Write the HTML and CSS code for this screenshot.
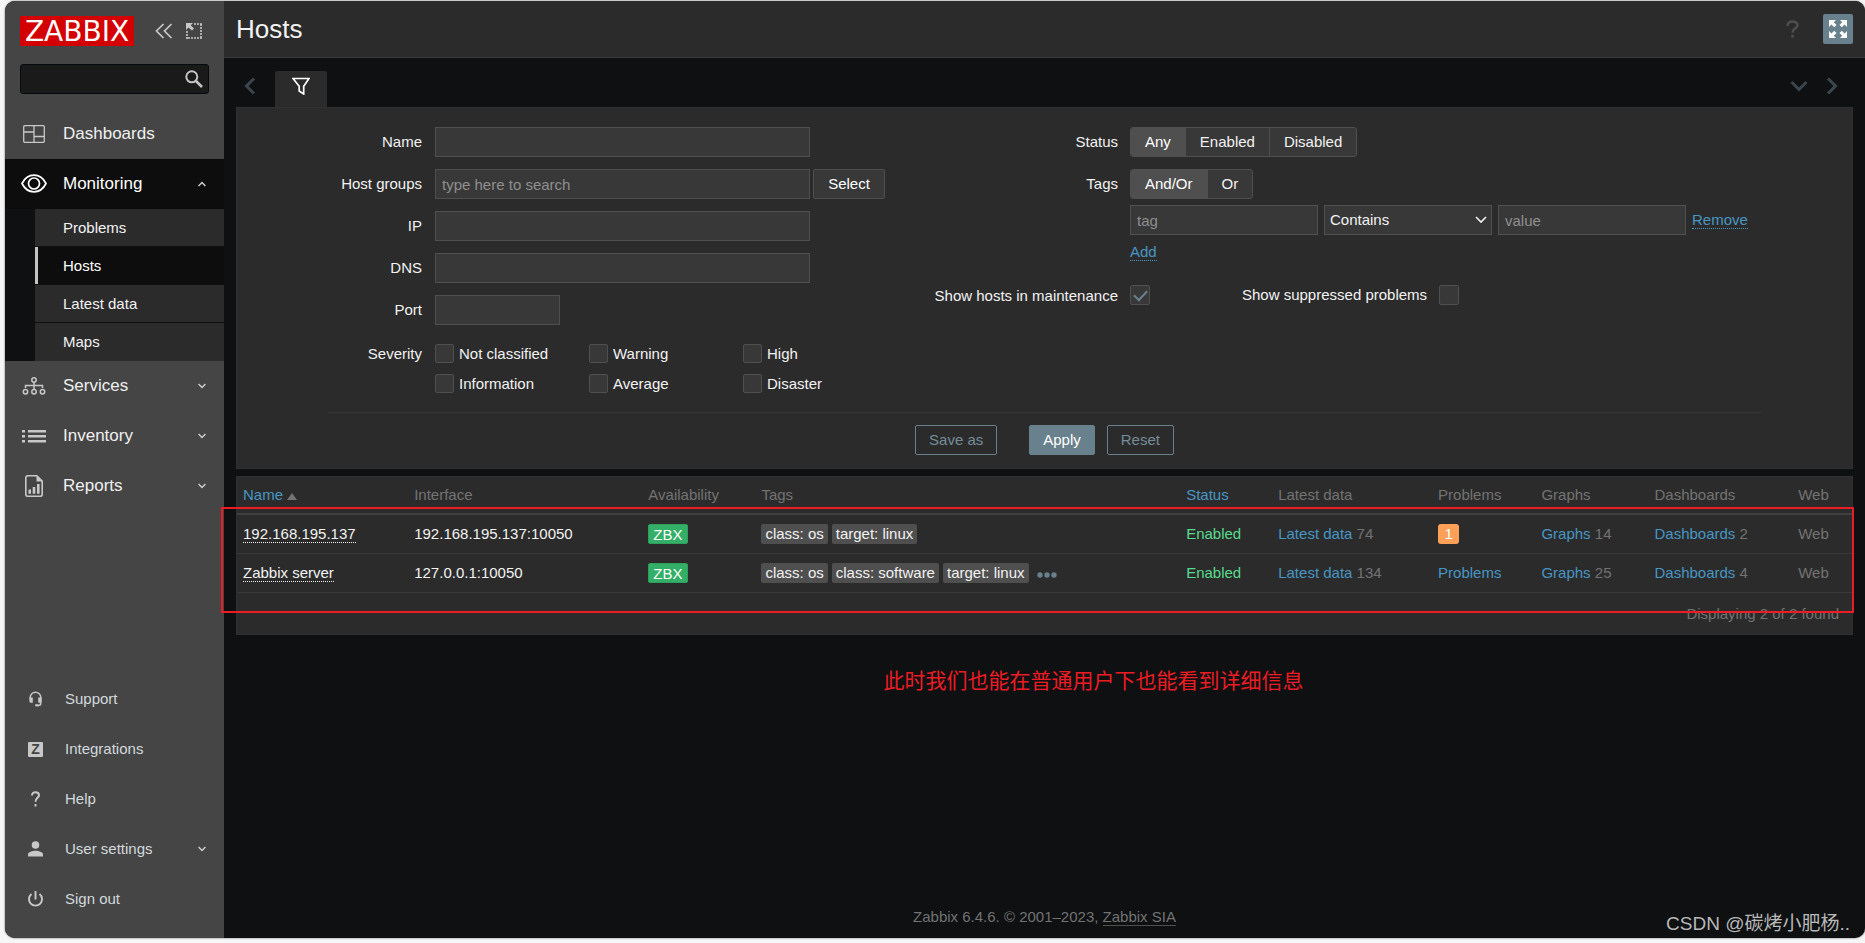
FILE: index.html
```html
<!DOCTYPE html>
<html lang="en">
<head>
<meta charset="utf-8">
<title>Hosts</title>
<link rel="stylesheet" href="styles.css">
</head>
<body>
<div class="app">
  <aside class="sidebar">
    <div class="brand">
      <a class="logo" href="#">ZABBIX</a>
      <button class="icon-btn brand-collapse" type="button" aria-label="Collapse sidebar">
        <svg width="18" height="16" viewBox="0 0 18 16" fill="none" stroke="currentColor" stroke-width="1.7"><path d="M8.5 1 1.5 8l7 7M16.500 1l-7 7 7 7"/></svg>
      </button>
      <button class="icon-btn" type="button" aria-label="Hide sidebar">
        <svg width="16" height="16" viewBox="0 0 16 16" fill="none" stroke="currentColor"><path d="M8 1h8M15 1v15M16 15H0M1 16V8" stroke-width="1.6" stroke-dasharray="2 1"/><path d="M0 0h7L4.700 2.300 8 5.600 6 7.600 2.500 4.400 0 7z" fill="currentColor" stroke="none"/></svg>
      </button>
    </div>
    <form class="search" role="search">
      <input type="text" aria-label="Search">
      <button class="icon-btn" type="button" aria-label="Run search">
        <svg width="18" height="18" viewBox="0 0 18 18" fill="none" stroke="currentColor"><circle cx="6.800" cy="6.800" r="5.500" stroke-width="2"/><path d="m11 11 6 6" stroke-width="2.600"/></svg>
      </button>
    </form>

    <nav class="menu" aria-label="Main">
      <a class="menu-item" href="#">
        <span class="menu-icon"><svg width="22" height="18" viewBox="0 0 22 18" fill="none" stroke="currentColor" stroke-width="1.300"><rect x=".7" y=".7" width="20.600" height="16.600" rx="1"/><path d="M11 1v16M1 7h10M11 11.500h10"/></svg></span>
        <span class="menu-text">Dashboards</span>
      </a>
      <a class="menu-item menu-item-open" href="#">
        <span class="menu-icon"><svg width="26" height="20" viewBox="0 0 26 20" fill="none" stroke="currentColor" stroke-width="1.700"><path d="M1 9.500C3.500 4.500 8 1.200 13 1.200s9.500 3.300 12 8.300c-2.500 5-7 8.300-12 8.300S3.500 14.500 1 9.500z"/><circle cx="13" cy="9.500" r="5.500"/></svg></span>
        <span class="menu-text">Monitoring</span>
        <svg class="menu-arrow" width="8" height="6" viewBox="0 0 8 6" fill="none" stroke="currentColor" stroke-width="1.400"><path d="m.6 5 3.400-3.600L7.400 5"/></svg>
      </a>
      <div class="submenu">
        <a class="submenu-item" href="#">Problems</a>
        <a class="submenu-item submenu-item-active" href="#">Hosts</a>
        <a class="submenu-item" href="#">Latest data</a>
        <a class="submenu-item" href="#">Maps</a>
      </div>
      <a class="menu-item" href="#">
        <span class="menu-icon"><svg width="24" height="18" viewBox="0 0 24 18" fill="none" stroke="currentColor" stroke-width="1.500"><circle cx="12" cy="3" r="2.200"/><circle cx="3.500" cy="14.800" r="2.200"/><circle cx="12" cy="14.800" r="2.200"/><circle cx="20.500" cy="14.800" r="2.200"/><path d="M12 5.200v7.400M3.500 11V8.500h17V11"/></svg></span>
        <span class="menu-text">Services</span>
        <svg class="menu-arrow" width="8" height="6" viewBox="0 0 8 6" fill="none" stroke="currentColor" stroke-width="1.400"><path d="M.6 1 4 4.600 7.400 1"/></svg>
      </a>
      <a class="menu-item" href="#">
        <span class="menu-icon"><svg width="24" height="14" viewBox="0 0 24 14" fill="currentColor"><path d="M0 1h3v2.500H0zM0 6h3v2.500H0zM0 11h3v2.500H0zM6 1h18v2.500H6zM6 6h18v2.500H6zM6 11h18v2.500H6z"/></svg></span>
        <span class="menu-text">Inventory</span>
        <svg class="menu-arrow" width="8" height="6" viewBox="0 0 8 6" fill="none" stroke="currentColor" stroke-width="1.400"><path d="M.6 1 4 4.600 7.400 1"/></svg>
      </a>
      <a class="menu-item" href="#">
        <span class="menu-icon"><svg width="18" height="22" viewBox="0 0 18 22" fill="none" stroke="currentColor"><path d="M2.800.8h9L17.200 6v13.200a2 2 0 0 1-2 2H2.800a2 2 0 0 1-2-2V2.800a2 2 0 0 1 2-2z" stroke-width="1.600"/><path d="M11.500.5V6.500h6zM3.500 14.500H6v4.300H3.500zM7.700 12h2.600v6.800H7.700zM12 9h2.600v9.800H12z" fill="currentColor" stroke="none"/></svg></span>
        <span class="menu-text">Reports</span>
        <svg class="menu-arrow" width="8" height="6" viewBox="0 0 8 6" fill="none" stroke="currentColor" stroke-width="1.400"><path d="M.6 1 4 4.600 7.400 1"/></svg>
      </a>
    </nav>

    <nav class="menu menu-user" aria-label="User">
      <a class="menu-item" href="#">
        <span class="menu-icon"><svg width="15" height="16" viewBox="0 0 15 16" fill="none" stroke="currentColor"><path d="M2.200 8V6.500a5.300 5.300 0 0 1 10.600 0V12c0 1.500-1 2.500-2.500 2.500H8" stroke-width="1.500"/><path d="M1.400 6.500h3.400v5.200H3.200c-1.200 0-1.800-.8-1.800-1.800zM10.200 6.500h3.400v3.400c0 1-.6 1.800-1.800 1.800h-1.600zM7.200 13.200h3v2h-3z" fill="currentColor" stroke="none"/></svg></span>
        <span class="menu-text">Support</span>
      </a>
      <a class="menu-item" href="#">
        <span class="menu-icon"><span class="z-icon">Z</span></span>
        <span class="menu-text">Integrations</span>
      </a>
      <a class="menu-item" href="#">
        <span class="menu-icon"><svg width="9" height="16" viewBox="0 0 9 16" fill="none" stroke="currentColor" stroke-width="2"><path d="M1 4.500C1 2.300 2.400 1.200 4.400 1.200S8 2.300 8 4.200C8 6.800 4.500 7 4.500 10.800M4.500 13v2.500"/></svg></span>
        <span class="menu-text">Help</span>
      </a>
      <a class="menu-item" href="#">
        <span class="menu-icon"><svg width="15" height="16" viewBox="0 0 15 16" fill="currentColor"><circle cx="7.500" cy="4" r="3.800"/><path d="M0 15.500v-2C0 11 4.500 9.800 7.500 9.800S15 11 15 13.500v2z"/></svg></span>
        <span class="menu-text">User settings</span>
        <svg class="menu-arrow" width="8" height="6" viewBox="0 0 8 6" fill="none" stroke="currentColor" stroke-width="1.400"><path d="M.6 1 4 4.600 7.400 1"/></svg>
      </a>
      <a class="menu-item" href="#">
        <span class="menu-icon"><svg width="15" height="16" viewBox="0 0 15 16" fill="none" stroke="currentColor" stroke-width="1.900"><path d="M3.500 3a6.500 6.500 0 1 0 8 0M7.500 0v8.500"/></svg></span>
        <span class="menu-text">Sign out</span>
      </a>
    </nav>
  </aside>

  <div class="page">
    <header class="page-header">
      <h1>Hosts</h1>
      <a class="help" href="#" aria-label="Help"><svg width="13" height="18" viewBox="0 0 13 18" fill="none" stroke="currentColor" stroke-width="2.400"><path d="M1.500 6C1.500 3 3.500 1.500 6.400 1.500S11.500 3 11.500 5.200C11.500 8.400 6.500 8.300 6.500 12.800M6.500 14.800v3"/></svg></a>
      <button class="kiosk" type="button" aria-label="Kiosk mode">
        <svg width="20" height="20" viewBox="0 0 20 20" fill="#fff"><path id="arr" d="M1 1h7L5.800 3.200l2.700 2.700-2.300 2.300-2.800-2.700L1 8z"/><use href="#arr" transform="matrix(-1 0 0 1 20 0)"/><use href="#arr" transform="matrix(1 0 0 -1 0 20)"/><use href="#arr" transform="rotate(180 10 10)"/></svg>
      </button>
    </header>

    <main class="content">
      <div class="tabs">
        <button class="icon-btn tab-nav tab-prev" type="button" aria-label="Previous tab"><svg width="12" height="18" viewBox="0 0 12 18" fill="none" stroke="currentColor" stroke-width="3"><path d="M10 1.500 2.500 9l7.500 7.500"/></svg></button>
        <button class="tab" type="button" aria-label="Filter"><svg width="18" height="18" viewBox="0 0 18 18" fill="none" stroke="currentColor" stroke-width="1.700"><path d="M1 1.500h16l-5.300 7.800V17l-4.500-3V9.300z"/></svg></button>
        <button class="icon-btn tab-nav tab-list" type="button" aria-label="List tabs"><svg width="18" height="12" viewBox="0 0 18 12" fill="none" stroke="currentColor" stroke-width="3"><path d="M1.500 2 9 9.500 16.500 2"/></svg></button>
        <button class="icon-btn tab-nav tab-next" type="button" aria-label="Next tab"><svg width="12" height="18" viewBox="0 0 12 18" fill="none" stroke="currentColor" stroke-width="3"><path d="M2 1.500 9.500 9 2 16.500"/></svg></button>
      </div>

      <form class="filter">
        <div class="filter-columns">
          <div class="fields fields-left">
            <label for="f-name">Name</label>
            <input class="field" id="f-name" type="text">
            <label for="f-groups">Host groups</label>
            <div class="with-button">
              <input class="field" id="f-groups" type="text" placeholder="type here to search">
              <button class="btn-grey" type="button">Select</button>
            </div>
            <label for="f-ip">IP</label>
            <input class="field" id="f-ip" type="text">
            <label for="f-dns">DNS</label>
            <input class="field" id="f-dns" type="text">
            <label for="f-port">Port</label>
            <input class="field field-short" id="f-port" type="text">
            <span class="severity-label" id="severity">Severity</span>
            <div class="severities" role="group" aria-labelledby="severity">
              <label><input class="check" type="checkbox">Not classified</label>
              <label><input class="check" type="checkbox">Warning</label>
              <label><input class="check" type="checkbox">High</label>
              <label><input class="check" type="checkbox">Information</label>
              <label><input class="check" type="checkbox">Average</label>
              <label><input class="check" type="checkbox">Disaster</label>
            </div>
          </div>

          <div class="fields fields-right">
            <span class="row-label" id="status">Status</span>
            <div class="segments" role="radiogroup" aria-labelledby="status">
              <label><input type="radio" name="status" checked><span>Any</span></label>
              <label><input type="radio" name="status"><span>Enabled</span></label>
              <label><input type="radio" name="status"><span>Disabled</span></label>
            </div>
            <span class="row-label" id="tags">Tags</span>
            <div class="tag-filter">
              <div class="segments" role="radiogroup" aria-labelledby="tags">
                <label><input type="radio" name="evaltype" checked><span>And/Or</span></label>
                <label><input type="radio" name="evaltype"><span>Or</span></label>
              </div>
              <div class="tag-row">
                <input class="field" type="text" placeholder="tag" aria-label="Tag">
                <div class="select">
                  <select class="field" aria-label="Operator"><option>Contains</option><option>Equals</option></select>
                  <svg width="12" height="8" viewBox="0 0 12 8" fill="none" stroke="currentColor" stroke-width="1.600"><path d="m1 1 5 5 5-5"/></svg>
                </div>
                <input class="field" type="text" placeholder="value" aria-label="Value">
                <button class="link-action" type="button">Remove</button>
              </div>
              <button class="link-action" type="button">Add</button>
            </div>
            <label class="toggle-label" for="f-maint">Show hosts in maintenance</label>
            <div class="toggles">
              <input class="check" id="f-maint" type="checkbox" checked>
              <label for="f-supp">Show suppressed problems</label>
              <input class="check" id="f-supp" type="checkbox">
            </div>
          </div>
        </div>
        <div class="filter-actions">
          <button class="btn-outline btn-save" type="button">Save as</button>
          <button class="btn-primary" type="button">Apply</button>
          <button class="btn-outline" type="button">Reset</button>
        </div>
      </form>

      <section class="hosts">
        <table>
          <colgroup>
            <col class="c-name"><col class="c-interface"><col class="c-avail"><col class="c-tags"><col class="c-status">
            <col class="c-latest"><col class="c-problems"><col class="c-graphs"><col class="c-dash"><col>
          </colgroup>
          <thead>
            <tr>
              <th><a href="#">Name <span class="sort-asc"></span></a></th><th>Interface</th><th>Availability</th><th>Tags</th><th><a href="#">Status</a></th>
              <th>Latest data</th><th>Problems</th><th>Graphs</th><th>Dashboards</th><th>Web</th>
            </tr>
          </thead>
          <tbody>
            <tr>
              <td><a class="host" href="#">192.168.195.137</a></td>
              <td>192.168.195.137:10050</td>
              <td><span class="avail">ZBX</span></td>
              <td><div class="tags"><span class="tag">class: os</span><span class="tag">target: linux</span></div></td>
              <td class="ok">Enabled</td>
              <td class="muted"><a href="#">Latest data</a> 74</td>
              <td><a class="problem-count" href="#">1</a></td>
              <td class="muted"><a href="#">Graphs</a> 14</td>
              <td class="muted"><a href="#">Dashboards</a> 2</td>
              <td class="muted">Web</td>
            </tr>
            <tr>
              <td><a class="host" href="#">Zabbix server</a></td>
              <td>127.0.0.1:10050</td>
              <td><span class="avail">ZBX</span></td>
              <td><div class="tags"><span class="tag">class: os</span><span class="tag">class: software</span><span class="tag">target: linux</span><button class="icon-btn more" type="button" aria-label="More tags"><svg width="20" height="6" viewBox="0 0 20 6" fill="currentColor"><circle cx="3" cy="3" r="2.700"/><circle cx="10" cy="3" r="2.700"/><circle cx="17" cy="3" r="2.700"/></svg></button></div></td>
              <td class="ok">Enabled</td>
              <td class="muted"><a href="#">Latest data</a> 134</td>
              <td><a href="#">Problems</a></td>
              <td class="muted"><a href="#">Graphs</a> 25</td>
              <td class="muted"><a href="#">Dashboards</a> 4</td>
              <td class="muted">Web</td>
            </tr>
          </tbody>
        </table>
        <p class="total">Displaying 2 of 2 found</p>
        <div class="highlight"></div>
      </section>

      <p class="note" lang="zh">此时我们也能在普通用户下也能看到详细信息</p>
    </main>

    <footer class="page-footer">Zabbix 6.4.6. © 2001–2023, <a href="#">Zabbix SIA</a></footer>
    <div class="watermark" lang="zh">CSDN @碳烤小肥杨..</div>
  </div>
</div>
</body>
</html>
```

FILE: styles.css
```css
* {
  box-sizing: border-box;
}

body {
  display: flex;
  min-height: 100vh;
  margin: 0;
  padding: 1px 0 5px 5px;
  background: #f6f6f6;
  color: #f2f2f2;
  font: 15px/18px "Liberation Sans", Arial, "Noto Sans CJK SC", sans-serif;
}

a {
  color: #4796c4;
  text-decoration: none;
}

button,
input,
select {
  margin: 0;
  color: inherit;
  font: inherit;
}

svg {
  display: block;
}

h1,
p {
  margin: 0;
  font-weight: normal;
}

.icon-btn {
  padding: 0;
  border: 0;
  background: none;
}

.app {
  display: flex;
  flex: 1;
  overflow: hidden;
  border-radius: 10px;
  background: #0e1012;
  box-shadow: 0 0 2px #555;
}

/* Sidebar */

.sidebar {
  display: flex;
  flex: 0 0 219px;
  flex-direction: column;
  min-width: 0;
  padding-bottom: 14px;
  background: #454545;
}

.brand {
  display: flex;
  align-items: center;
  padding: 15px 15px 0;
  color: #c8c8c8;
}

.logo {
  width: 114px;
  height: 30px;
  background: #d40000;
  color: #fff;
  font-family: "DejaVu Sans", sans-serif;
  font-size: 28px;
  line-height: 31px;
  text-align: center;
}

.brand-collapse {
  margin: 0 13px 0 21px;
}

.search {
  display: flex;
  align-items: center;
  height: 30px;
  margin: 18px 15px 15px;
  padding: 0 5px;
  border: 1px solid #050a10;
  border-radius: 3px;
  background: #1a1a1a;
  color: #c4c4c4;
}

.search input {
  flex: 1;
  min-width: 0;
  padding: 0;
  border: 0;
  outline: 0;
  background: none;
}

.menu-item {
  display: flex;
  align-items: center;
  height: 50px;
  padding: 0 18px 0 15px;
  color: #f0f0f0;
  font-size: 17px;
}

.menu-icon {
  display: flex;
  flex: 0 0 28px;
  justify-content: center;
  margin-right: 15px;
  color: #c8c8c8;
}

.menu-text {
  flex: 1;
}

.menu-arrow {
  color: #d0d0d0;
}

.menu-item-open {
  background: #0d0d0d;
  color: #fff;
}

.menu-item-open .menu-icon {
  color: #fff;
}

.submenu {
  padding-left: 30px;
  background: #0e1012;
}

.submenu-item {
  display: block;
  height: 38px;
  padding-left: 28px;
  border-bottom: 1px solid #0e1012;
  background: #2b2b2b;
  color: #f2f2f2;
  line-height: 37px;
}

.submenu-item:last-child {
  border-bottom-color: #2b2b2b;
}

.submenu-item-active {
  background: #0d0d0d;
  box-shadow: inset 3px 0 #c4c4c4;
  color: #fff;
}

.menu-user {
  margin-top: auto;
}

.menu-user .menu-item {
  color: #d2d9dd;
  font-size: 15px;
}

.menu-user .menu-icon {
  flex-basis: 31px;
  margin-right: 14px;
}

.z-icon {
  width: 15px;
  height: 15px;
  border-radius: 1px;
  background: #c8c8c8;
  color: #454545;
  font-size: 14px;
  font-weight: bold;
  line-height: 15px;
  text-align: center;
}

/* Page */

.page {
  position: relative;
  display: flex;
  flex: 1;
  flex-direction: column;
  min-width: 0;
}

.page-header {
  display: flex;
  align-items: center;
  height: 57px;
  padding: 0 12px;
  border-bottom: 1px solid #383838;
  background: #2b2b2b;
}

.page-header h1 {
  flex: 1;
  color: #f2f2f2;
  font-size: 26px;
  line-height: 30px;
}

.help {
  margin-right: 24px;
  color: #4f4f4f;
}

.kiosk {
  display: flex;
  align-items: center;
  justify-content: center;
  width: 30px;
  height: 30px;
  padding: 0;
  border: 0;
  border-radius: 2px;
  background: #69808d;
}

.content {
  flex: 1;
  padding: 13px 12px 0;
}

/* Filter */

.tabs {
  display: flex;
  align-items: center;
  padding: 0 15px 0 8px;
}

.tab-nav {
  margin-bottom: 6px;
  color: #3b474f;
}

.tab {
  display: flex;
  justify-content: center;
  width: 52px;
  height: 36px;
  margin: 0 auto 0 19px;
  padding: 6px 0 0;
  border: 0;
  border-radius: 2px 2px 0 0;
  background: #2b2b2b;
  color: #fff;
}

.tab-list {
  margin-right: 18px;
}

.filter {
  padding: 19px 91px 13px;
  border: 1px solid #303030;
  background: #2b2b2b;
}

.filter-columns {
  display: flex;
  justify-content: space-between;
  padding-bottom: 19px;
  border-bottom: 1px solid #383838;
}

.fields {
  display: grid;
  align-items: start;
  align-content: start;
  row-gap: 12px;
}

.fields > label,
.row-label,
.severity-label {
  line-height: 29px;
  text-align: right;
}

.fields-left {
  grid-template-columns: 94px 450px;
  column-gap: 13px;
}

.fields-right {
  grid-template-columns: 184px 631px;
  column-gap: 12px;
}

.field {
  width: 375px;
  height: 30px;
  padding: 0 6px;
  border: 1px solid #4f4f4f;
  border-radius: 0;
  outline: 0;
  background: #383838;
}

.field::placeholder {
  color: #8f8f8f;
  opacity: 1;
}

.field-short {
  width: 125px;
}

.with-button {
  display: flex;
  gap: 3px;
}

.btn-grey {
  width: 72px;
  height: 30px;
  padding: 0;
  border: 1px solid #4f4f4f;
  border-radius: 2px;
  background: #383838;
  color: #fff;
}

.severity-label {
  padding-top: 2px;
}

.severities {
  display: grid;
  grid-template-columns: repeat(3, 154px);
  row-gap: 11px;
  padding-top: 7px;
}

.severities label {
  display: flex;
  align-items: center;
  gap: 5px;
  height: 19px;
  line-height: 19px;
}

.check {
  flex: none;
  width: 19px;
  height: 19px;
  margin: 0;
  border: 1px solid #4f4f4f;
  border-radius: 2px;
  appearance: none;
  background: #383838;
}

.check:checked::before {
  display: block;
  width: 11px;
  height: 6px;
  margin: 4px 0 0 3px;
  border-bottom: 2px solid #69808d;
  border-left: 2px solid #69808d;
  content: "";
  transform: rotate(-47deg);
}

.segments {
  display: inline-flex;
  justify-self: start;
  height: 30px;
  overflow: hidden;
  border: 1px solid #4f4f4f;
  border-radius: 3px;
  background: #383838;
}

.segments label + label {
  border-left: 1px solid #4f4f4f;
}

.segments input {
  position: absolute;
  opacity: 0;
}

.segments span {
  display: block;
  padding: 0 14px;
  line-height: 28px;
}

.segments input:checked + span {
  background: #4f4f4f;
  color: #fff;
}

.tag-filter {
  display: flex;
  flex-direction: column;
  align-items: flex-start;
}

.tag-row {
  display: flex;
  gap: 6px;
  align-items: center;
  margin: 6px 0 8px;
}

.tag-row .field {
  width: 188px;
}

.select {
  position: relative;
}

.tag-row .select .field {
  display: block;
  width: 168px;
  padding: 0 5px;
  appearance: none;
}

.select svg {
  position: absolute;
  top: 11px;
  right: 5px;
  pointer-events: none;
}

.link-action {
  padding: 0;
  border: 0;
  border-bottom: 1px dotted #4796c4;
  background: none;
  color: #4796c4;
  line-height: 17px;
}

.fields-right .toggle-label {
  padding-top: 13px;
  line-height: 20px;
}

.toggles {
  display: flex;
  gap: 12px;
  align-items: center;
  padding-top: 12px;
}

.toggles .check {
  width: 20px;
  height: 20px;
}

.toggles label {
  margin-left: 80px;
}

.filter-actions {
  display: flex;
  gap: 12px;
  justify-content: center;
  padding-top: 12px;
}

.btn-outline,
.btn-primary {
  height: 30px;
  padding: 0 13px;
  border: 1px solid #69808d;
  border-radius: 2px;
  background: none;
  color: #768d99;
}

.btn-primary {
  background: #69808d;
  color: #fff;
}

.btn-save {
  margin-right: 20px;
}

/* Host table */

.hosts {
  position: relative;
  margin-top: 7px;
  border: 1px solid #303030;
  background: #2b2b2b;
}

.hosts table {
  width: 100%;
  border-spacing: 0;
  table-layout: fixed;
}

.c-name { width: 10.6%; }
.c-interface { width: 14.5%; }
.c-avail { width: 7%; }
.c-tags { width: 26.3%; }
.c-status { width: 5.7%; }
.c-latest { width: 9.9%; }
.c-problems { width: 6.4%; }
.c-graphs { width: 7%; }
.c-dash { width: 8.9%; }

.hosts th,
.hosts td {
  height: 39px;
  padding: 0 6px;
  border-bottom: 1px solid #383838;
  text-align: left;
  white-space: nowrap;
}

.hosts th {
  height: 38px;
  border-bottom: 2px solid #404040;
  color: #737373;
  font-weight: normal;
}

.sort-asc {
  display: inline-block;
  border: 5px solid transparent;
  border-top: 0;
  border-bottom: 7px solid #737373;
}

.hosts .host {
  border-bottom: 1px dotted #f2f2f2;
  color: #f2f2f2;
}

.avail,
.tag,
.problem-count {
  display: inline-block;
  height: 20px;
  border-radius: 2px;
  line-height: 20px;
}

.avail {
  padding: 0 4px;
  border: 1px solid #2f9f5e;
  background: #34af67;
  color: #fff;
  line-height: 19px;
}

.tags {
  display: flex;
  gap: 4px;
  align-items: center;
}

.tag {
  padding: 0 4px;
  background: #4f4f4f;
}

.more {
  margin-left: 4px;
  padding-top: 4px;
  color: #69808d;
}

.hosts .problem-count {
  width: 21px;
  border-radius: 3px;
  background: #ffa059;
  color: #fff;
  text-align: center;
}

.ok {
  color: #59db8f;
}

.muted {
  color: #737373;
}

.total {
  padding-right: 13px;
  color: #737373;
  line-height: 41px;
  text-align: right;
}

/* Annotation frame drawn over the rows */
.highlight {
  position: absolute;
  top: 30px;
  right: -2px;
  bottom: 21px;
  left: -16px;
  border: 2px solid #ec1c24;
  pointer-events: none;
}

.note {
  margin-top: 29px;
  padding-left: 98px;
  color: #ec1c24;
  font-family: "Noto Sans CJK SC", sans-serif;
  font-size: 21px;
  line-height: 30px;
  text-align: center;
}

.page-footer {
  padding-bottom: 12px;
  color: #737373;
  text-align: center;
}

.page-footer a {
  border-bottom: 1px solid #4f4f4f;
  color: #737373;
}

.watermark {
  position: absolute;
  right: 15px;
  bottom: 1px;
  color: #b8b8b8;
  font-size: 19px;
  line-height: 26px;
}
```
